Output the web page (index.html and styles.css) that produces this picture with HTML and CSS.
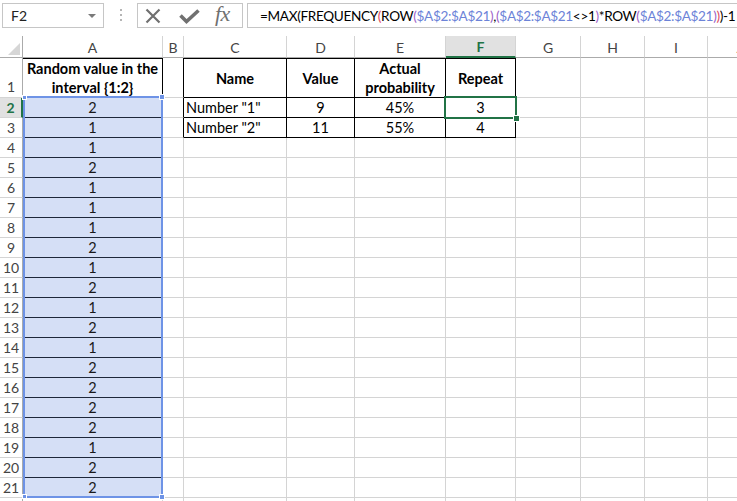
FILE: index.html
```html
<!DOCTYPE html>
<html>
<head>
<meta charset="utf-8">
<link rel="stylesheet" href="styles.css">
</head>
<body>
<div class="fbar">
  <div class="namebox"><span>F2</span><span class="arrow"></span></div>
  <div class="dots"><i></i><i></i><i></i></div>
  <div class="fxbox">
    <svg class="ico-x" width="16" height="16" viewBox="0 0 16 16"><path d="M1.5 1.5 L14.5 14.5 M14.5 1.5 L1.5 14.5" stroke="#707070" stroke-width="2.2" fill="none"/></svg>
    <svg class="ico-ok" width="21" height="15" viewBox="0 0 21 15"><path d="M1.5 6.5 L7.5 12.5 L19.5 1.5" stroke="#707070" stroke-width="3.6" fill="none"/></svg>
    <span class="fx">fx</span>
  </div>
  <div class="formula"><span>=MAX(FREQUENCY</span><span class="p1">(</span><span>ROW</span><span class="p2">(</span><span class="rg">$A$2:$A$21</span><span class="p2">)</span><span>,</span><span class="p2">(</span><span class="rg">$A$2:$A$21</span><span>&lt;&gt;1</span><span class="p2">)</span><span>*ROW</span><span class="p2">(</span><span class="rg">$A$2:$A$21</span><span class="p2">)</span><span class="p1">)</span><span>)-1</span></div>
</div>
<div class="sheet">
  <span class="corner"><i class="tri"></i></span><span class="ch">A</span><span class="ch">B</span><span class="ch">C</span><span class="ch">D</span><span class="ch">E</span><span class="ch csel">F</span><span class="ch">G</span><span class="ch">H</span><span class="ch">I</span><span class="ch">J</span>

  <span class="rh rh1">1</span><span class="a1">Random value in the<br>interval {1:2}</span><span class="bl"></span><span class="t t1 b">Name</span><span class="t t1 b">Value</span><span class="t t1 b">Actual<br>probability</span><span class="t t1 b">Repeat</span><span></span><span></span><span></span><span></span>

  <span class="rh rsel">2</span><span class="a">2</span><span class="bl"></span><span class="t lft">Number "1"</span><span class="t">9</span><span class="t">45%</span><span class="t">3</span><span></span><span></span><span></span><span></span>

  <span class="rh">3</span><span class="a">1</span><span class="bl"></span><span class="t lft">Number "2"</span><span class="t">11</span><span class="t">55%</span><span class="t">4</span><span></span><span></span><span></span><span></span>

  <span class="rh">4</span><span class="a">1</span><span></span><span></span><span></span><span></span><span></span><span></span><span></span><span></span><span></span>
  <span class="rh">5</span><span class="a">2</span><span></span><span></span><span></span><span></span><span></span><span></span><span></span><span></span><span></span>
  <span class="rh">6</span><span class="a">1</span><span></span><span></span><span></span><span></span><span></span><span></span><span></span><span></span><span></span>
  <span class="rh">7</span><span class="a">1</span><span></span><span></span><span></span><span></span><span></span><span></span><span></span><span></span><span></span>
  <span class="rh">8</span><span class="a">1</span><span></span><span></span><span></span><span></span><span></span><span></span><span></span><span></span><span></span>
  <span class="rh">9</span><span class="a">2</span><span></span><span></span><span></span><span></span><span></span><span></span><span></span><span></span><span></span>
  <span class="rh">10</span><span class="a">1</span><span></span><span></span><span></span><span></span><span></span><span></span><span></span><span></span><span></span>
  <span class="rh">11</span><span class="a">2</span><span></span><span></span><span></span><span></span><span></span><span></span><span></span><span></span><span></span>
  <span class="rh">12</span><span class="a">1</span><span></span><span></span><span></span><span></span><span></span><span></span><span></span><span></span><span></span>
  <span class="rh">13</span><span class="a">2</span><span></span><span></span><span></span><span></span><span></span><span></span><span></span><span></span><span></span>
  <span class="rh">14</span><span class="a">1</span><span></span><span></span><span></span><span></span><span></span><span></span><span></span><span></span><span></span>
  <span class="rh">15</span><span class="a">2</span><span></span><span></span><span></span><span></span><span></span><span></span><span></span><span></span><span></span>
  <span class="rh">16</span><span class="a">2</span><span></span><span></span><span></span><span></span><span></span><span></span><span></span><span></span><span></span>
  <span class="rh">17</span><span class="a">2</span><span></span><span></span><span></span><span></span><span></span><span></span><span></span><span></span><span></span>
  <span class="rh">18</span><span class="a">2</span><span></span><span></span><span></span><span></span><span></span><span></span><span></span><span></span><span></span>
  <span class="rh">19</span><span class="a">1</span><span></span><span></span><span></span><span></span><span></span><span></span><span></span><span></span><span></span>
  <span class="rh">20</span><span class="a">2</span><span></span><span></span><span></span><span></span><span></span><span></span><span></span><span></span><span></span>
  <span class="rh">21</span><span class="a">2</span><span></span><span></span><span></span><span></span><span></span><span></span><span></span><span></span><span></span>
  <span class="rh rh22"></span><span></span><span></span><span></span><span></span><span></span><span></span><span></span><span></span><span></span><span></span>

  <div class="refsel"><i class="h htl"></i><i class="h htr"></i><i class="h hbl"></i><i class="h hbr"></i></div>
  <div class="active"><i class="fill"></i></div>
</div>
</body>
</html>
```
FILE: styles.css
```css
* { box-sizing: border-box; }
html, body { margin: 0; height: 100%; overflow: hidden; background: #fff; }
body { font-family: Lato, "Liberation Sans", sans-serif; color: #000; }

.fbar { height: 36px; display: flex; align-items: flex-start; padding-top: 3px; overflow: hidden; }
.namebox { margin-left: 2px; width: 102px; height: 25px; border: 1px solid #c6c6c6; display: flex; align-items: center; padding-left: 8px; font-size: 14px; color: #222; flex: none; }
.namebox .arrow { margin-left: auto; margin-right: 7px; width: 0; height: 0; border-left: 4px solid transparent; border-right: 4px solid transparent; border-top: 4px solid #7a7a7a; }
.dots { width: 33px; height: 25px; flex: none; display: flex; flex-direction: column; align-items: center; gap: 3px; padding-top: 6px; }
.dots i { display: block; width: 2px; height: 2px; background: #b5b5b5; }
.fxbox { width: 106px; height: 25px; flex: none; border: 1px solid #c6c6c6; display: flex; align-items: center; padding-left: 7px; }
.ico-x { flex: none; }
.ico-ok { flex: none; margin-left: 18px; margin-top: 2px; }
.fx { margin-left: 15px; font-family: "Liberation Serif", serif; font-style: italic; font-size: 22px; color: #707070; line-height: 1; margin-top: -3px; letter-spacing: -0.5px; }
.formula { margin-left: 4px; flex: 1; min-width: 0; height: 25px; border: 1px solid #c6c6c6; border-right: none; padding-left: 12px; white-space: nowrap; overflow: hidden; font-size: 13.6px; letter-spacing: -0.35px; display: flex; align-items: center; color: #000; }
.formula .p1 { color: #e04a5e; }
.formula .p2 { color: #9d62c8; }
.formula .rg { color: #6c83d8; }

.sheet { position: relative; display: grid; grid-template-columns: 23px 140px 21px 103px 68px 91px 70px 65px 64px 63px 64px; grid-template-rows: 22px 40px repeat(21, 20px); }
.sheet > span { display: flex; align-items: center; justify-content: center; border-right: 1px solid #d4d4d4; border-bottom: 1px solid #d4d4d4; font-size: 14.5px; white-space: nowrap; overflow: hidden; text-align: center; line-height: 19px; }

.sheet > .corner { position: relative; border-right: 1px solid #ababab; border-bottom: 1px solid #ababab; }
.tri { position: absolute; right: 2px; bottom: 2px; width: 0; height: 0; border-left: 12px solid transparent; border-bottom: 12px solid #d6d6d6; }
.sheet > .ch { color: #444; font-size: 14px; border-bottom: 1px solid #ababab; padding-top: 1px; }
.sheet > .csel { background: #e1e1e1; color: #217346; font-weight: 700; border-bottom: 2px solid #217346; }
.sheet > .rh { color: #444; font-size: 14px; border-right: 1px solid #ababab; }
.sheet > .rh1 { align-items: flex-end; padding-bottom: 1px; }
.sheet > .rsel { background: #e1e1e1; color: #217346; font-weight: 700; border-right: 2px solid #217346; }

.sheet > .a1 { font-weight: 700; border-right: 1px solid #000; border-top: 1px solid #000; white-space: normal; }
.sheet > .a { background: #d5dff6; border-right: 1px solid #000; border-bottom: 1px solid #1e273a; color: #1a1a1a; }
.sheet > .bl { border-right: 1px solid #000; }
.sheet > .t { border-right: 1px solid #000; border-bottom: 1px solid #000; }
.sheet > .t1 { border-top: 1px solid #000; }
.sheet > .b { font-weight: 700; white-space: normal; }
.sheet > .lft { justify-content: flex-start; padding-left: 2px; }

.refsel { position: absolute; grid-column: 2 / 3; grid-row: 3 / 23; top: -2px; left: 0; right: 0; bottom: 0; border: 2px solid #6e93e6; z-index: 2; pointer-events: none; }
.h { position: absolute; width: 6px; height: 6px; background: #6e93e6; border: 1px solid #fff; }
.htl { left: -3px; top: -3px; width: 5px; height: 5px; }
.htr { right: -4px; top: -4px; }
.hbl { left: -3px; bottom: -3px; width: 5px; height: 5px; }
.hbr { right: -4px; bottom: -4px; }

.active { position: absolute; grid-column: 7 / 8; grid-row: 3 / 4; top: -2px; left: -2px; right: -1px; bottom: -1px; border: 2px solid #217346; z-index: 3; }
.fill { position: absolute; right: -5px; bottom: -5px; width: 7px; height: 7px; background: #217346; border: 1px solid #fff; }
```
